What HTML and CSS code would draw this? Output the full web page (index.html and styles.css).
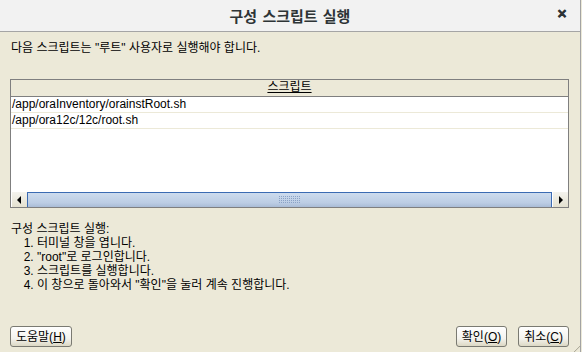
FILE: index.html
```html
<!DOCTYPE html>
<html lang="ko">
<head>
    <meta charset="UTF-8">
    <title>구성 스크립트 실행</title>
    <link rel="stylesheet" href="styles.css">
</head>
<body>
    <div class="window">
        <div class="titlebar">
            <span class="title">구성 스크립트 실행</span>
            <span class="close">&#x2715;</span>
        </div>

        <div class="content">
            <p class="message">다음 스크립트는 "루트" 사용자로 실행해야 합니다.</p>

            <div class="table">
                <div class="table-head"><span>스크립트</span></div>
                <div class="row">/app/oraInventory/orainstRoot.sh</div>
                <div class="row">/app/ora12c/12c/root.sh</div>
                <div class="table-fill"></div>
                <div class="hscroll">
                    <div class="arrow">
                        <svg width="5" height="8" viewBox="0 0 5 8"><path d="M4 0 L0 4 L4 8 Z" fill="#000"/></svg>
                    </div>
                    <div class="thumb">
                        <svg width="22" height="8" viewBox="0 0 22 8">
                            <defs>
                                <pattern id="dots" width="2" height="2" patternUnits="userSpaceOnUse">
                                    <rect x="0" y="0" width="1" height="1" fill="#8aa2c6"/>
                                </pattern>
                            </defs>
                            <rect width="22" height="8" fill="url(#dots)"/>
                        </svg>
                    </div>
                    <div class="arrow">
                        <svg width="5" height="8" viewBox="0 0 5 8"><path d="M1 0 L5 4 L1 8 Z" fill="#000"/></svg>
                    </div>
                </div>
            </div>

            <div class="steps">
                <p>구성 스크립트 실행:</p>
                <ol>
                    <li>터미널 창을 엽니다.</li>
                    <li>"root"로 로그인합니다.</li>
                    <li>스크립트를 실행합니다.</li>
                    <li>이 창으로 돌아와서 "확인"을 눌러 계속 진행합니다.</li>
                </ol>
            </div>

            <div class="buttons">
                <button class="btn">도움말(<u>H</u>)</button>
                <span class="spacer"></span>
                <button class="btn">확인(<u>O</u>)</button>
                <button class="btn">취소(<u>C</u>)</button>
            </div>
        </div>
        <span class="resize-grip"></span>
    </div>
</body>
</html>
```

FILE: styles.css
```css
html, body {
    margin: 0;
    padding: 0;
}

body {
    width: 582px;
    height: 352px;
    overflow: hidden;
    background-color: #ece9d8;
    font-family: "Liberation Sans", "Noto Sans CJK KR", sans-serif;
    font-size: 12px;
    color: #000;
}

.window {
    position: relative;
    width: 580px;
    height: 352px;
    border-right: 1px solid #a3a3a3;
    display: flex;
    flex-direction: column;
}

.titlebar {
    height: 31px;
    background-color: #f2f2f2;
    border-bottom: 1px solid #a5a5a5;
    display: flex;
    align-items: center;
    justify-content: center;
    position: relative;
}

.title {
    font-family: "DejaVu Sans", "Noto Sans CJK KR", sans-serif;
    font-weight: bold;
    font-size: 15px;
    color: #2e3436;
}

.close {
    position: absolute;
    right: 13px;
    top: 7px;
    font-size: 12px;
    font-weight: bold;
    color: #2e3436;
    -webkit-text-stroke: 0.6px #2e3436;
}

.content {
    flex: 1;
    padding: 9px 11px 5px 10px;
    display: flex;
    flex-direction: column;
}

.message {
    margin: 0 0 23px 1px;
    line-height: 15px;
}

.table {
    border: 1px solid #7f7f7f;
    height: 127px;
    display: flex;
    flex-direction: column;
    background-color: #fff;
}

.table-head {
    height: 16px;
    background-color: #ece9d8;
    border-bottom: 1px solid #7f7f7f;
    text-align: center;
    line-height: 15px;
}

.table-head span {
    text-decoration: underline;
}

.row {
    height: 15px;
    line-height: 15px;
    border-bottom: 1px solid #ece9d8;
    padding-left: 1px;
}

.table-fill {
    flex: 1;
}

.hscroll {
    height: 15px;
    display: flex;
}

.arrow {
    width: 15px;
    background: linear-gradient(#f4f3ee, #e4e1d0);
    border-left: 1px solid #fff;
    display: flex;
    align-items: center;
    justify-content: center;
}

.thumb {
    flex: 1;
    border-top: 1px solid #3b6bb3;
    border-left: 1px solid #3b6bb3;
    border-right: 1px solid #3b6bb3;
    background: linear-gradient(#cddcee, #bccde4 70%, #a9bcd6);
    display: flex;
    align-items: center;
    justify-content: center;
}

.steps {
    margin-top: 14px;
    line-height: 14px;
}

.steps p {
    margin: 0 0 0 1px;
}

.steps ol {
    margin: 0;
    padding-left: 27px;
}

.buttons {
    margin-top: auto;
    display: flex;
    gap: 11px;
}

.spacer {
    flex: 1;
}

.btn {
    height: 21px;
    padding: 0 5px;
    font-family: "Liberation Sans", "Noto Sans CJK KR", sans-serif;
    font-size: 12px;
    color: #000;
    border: 1px solid #7a7a72;
    border-radius: 3px;
    background: linear-gradient(#ffffff, #f4f3ee 60%, #dcd8c4);
    line-height: 18px;
}

.resize-grip {
    position: absolute;
    right: 0;
    bottom: 0;
    width: 6px;
    height: 6px;
    background: linear-gradient(135deg, transparent 45%, #b0ad9c 50%, transparent 60%);
}
```
